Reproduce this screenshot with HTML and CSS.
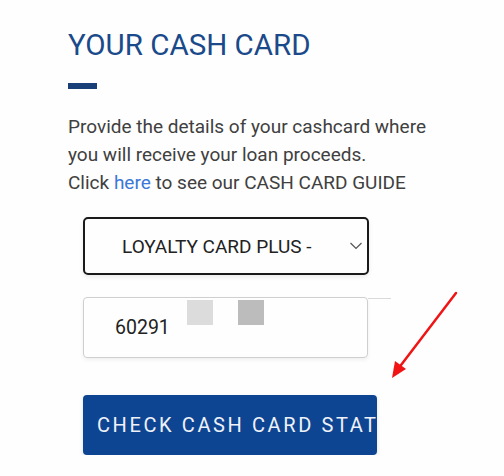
FILE: index.html
```html
<!DOCTYPE html>
<html>
<head>
    <meta name="viewport" content="width=device-width, initial-scale=1">
    <link rel="stylesheet" href="styles.css">
</head>
<body>
    <div class="page">
        <h1 class="title">YOUR CASH CARD</h1>
        <div class="title-bar"></div>
        <p class="intro">
            Provide the details of your cashcard where<br>
            you will receive your loan proceeds.<br>
            Click <a href="#" class="guide-link">here</a> to see our CASH CARD GUIDE
        </p>

        <div class="form">
            <div class="select-box">
                <span class="select-value">LOYALTY CARD PLUS -</span>
                <svg class="chevron" width="12" height="8" viewBox="0 0 12 8">
                    <path d="M0.5 1 L6 6.5 L11.5 1" fill="none" stroke="#555" stroke-width="1.2"/>
                </svg>
            </div>

            <div class="card-field">
                <span class="card-number">60291</span>
                <span class="blur blur-light"></span>
                <span class="blur blur-dark"></span>
            </div>

            <button class="check-btn">CHECK CASH CARD STATUS</button>
        </div>
    </div>

    <!-- annotation arrow -->
    <svg class="arrow" width="80" height="100" viewBox="0 0 80 100">
        <line x1="72" y1="6" x2="14" y2="82" stroke="#f01414" stroke-width="2.5" stroke-linecap="round"/>
        <polygon points="8,91 11,74 22,82" fill="#f01414"/>
    </svg>
</body>
</html>
```

FILE: styles.css
```css
body {
    margin: 0;
    background: #fefefe;
    font-family: Roboto, "Noto Sans", sans-serif;
}
.page {
    padding: 27px 0 0 68px;
}
.title {
    margin: 0;
    font-size: 29.5px;
    line-height: 36px;
    font-weight: 400;
    color: #1a4a8a;
}
.title-bar {
    width: 29px;
    height: 6px;
    margin-top: 20px;
    background: #183f78;
}
.intro {
    margin: 24px 0 0;
    font-size: 19px;
    line-height: 28px;
    color: #404040;
}
.guide-link {
    color: #3b78d8;
    text-decoration: none;
}
.form {
    margin-left: 15px;
    margin-top: 20px;
    width: 294px;
}
.select-box {
    box-sizing: border-box;
    width: 286px;
    height: 58px;
    border: 2px solid #1a1a1a;
    border-radius: 5px;
    display: flex;
    align-items: center;
    padding: 0 5px 0 37px;
    box-shadow: 0 2px 4px rgba(0,0,0,0.08);
}
.select-value {
    flex: 1;
    font-size: 19px;
    color: #222;
}
.card-field {
    position: relative;
    box-sizing: border-box;
    width: 285px;
    height: 61px;
    margin-top: 22px;
    border: 1px solid #cfcfcf;
    border-radius: 4px;
    display: flex;
    align-items: center;
    padding-left: 31px;
    box-shadow: 0 2px 4px rgba(0,0,0,0.06);
}
.card-field::after {
    content: "";
    position: absolute;
    top: 0;
    left: 284px;
    width: 23px;
    height: 1px;
    background: #dadada;
}
.card-number {
    font-size: 19.5px;
    color: #222;
}
.blur {
    position: absolute;
    top: 2px;
    width: 26px;
    height: 25px;
}
.blur-light {
    left: 103px;
    background: #dcdcdc;
}
.blur-dark {
    left: 154px;
    background: #bcbcbc;
}
.check-btn {
    display: block;
    box-sizing: border-box;
    width: 294px;
    height: 60px;
    margin-top: 37px;
    padding: 0 0 0 14px;
    border: none;
    border-radius: 4px;
    background: #0e4592;
    color: #eef2f8;
    font-family: Roboto, sans-serif;
    font-size: 20px;
    letter-spacing: 2.6px;
    text-align: left;
    white-space: nowrap;
    overflow: hidden;
    box-shadow: 0 2px 4px rgba(0,0,0,0.12);
}
.arrow {
    position: absolute;
    left: 384px;
    top: 287px;
}
```
